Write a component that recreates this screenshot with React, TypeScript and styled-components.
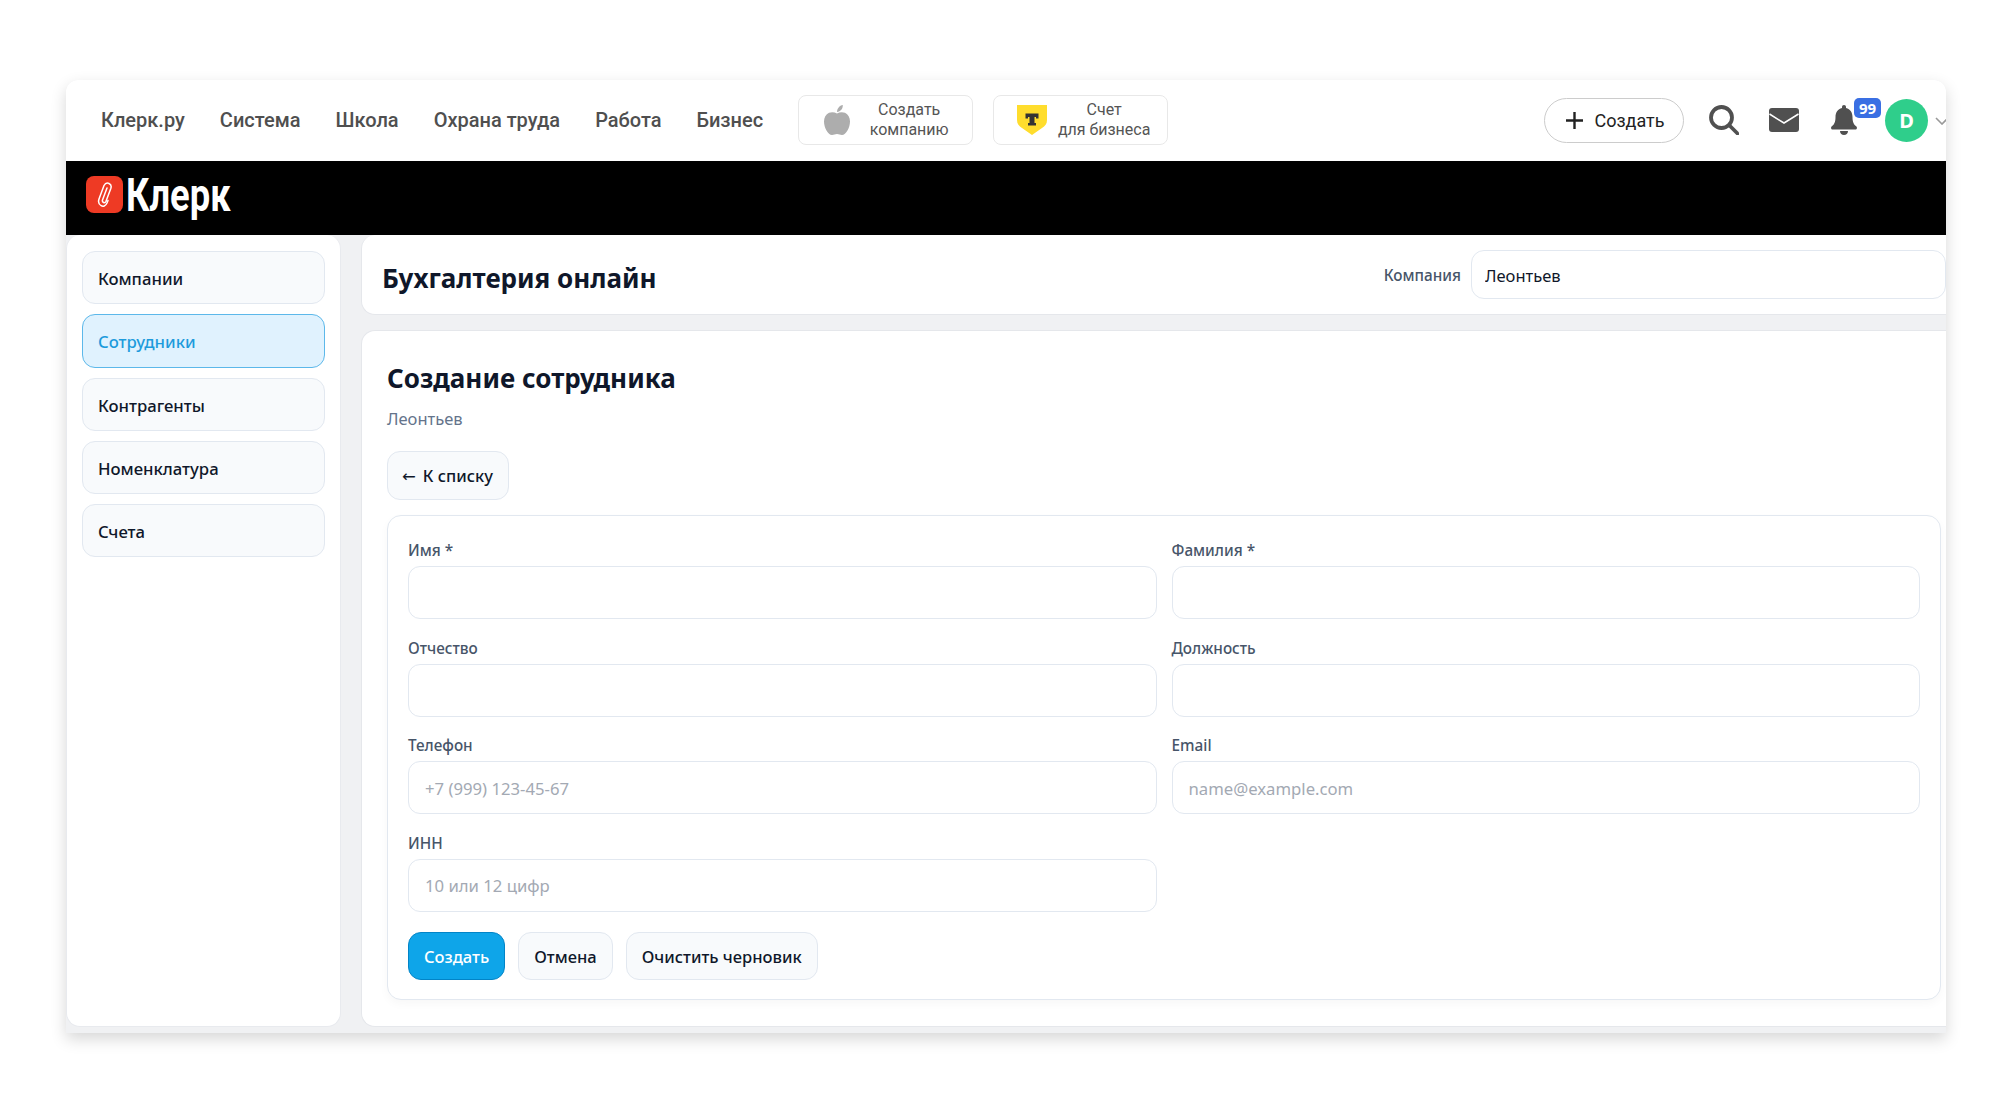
import * as React from "react";
import styled, { createGlobalStyle } from "styled-components";

const UI_FONT = `"Noto Sans", "Open Sans", sans-serif`;
const TOP_FONT = `Roboto, "Liberation Sans", sans-serif`;

const GlobalStyle = createGlobalStyle`
    html, body {
        margin: 0;
        padding: 0;
        background: #fff;
    }
    * {
        box-sizing: border-box;
    }
`;

const Page = styled.div`
    width: 2012px;
    height: 1111px;
    padding: 80px 66px 78px;
    overflow: hidden;
    font-family: ${UI_FONT};
`;

const Frame = styled.div`
    width: 1880px;
    height: 953px;
    display: flex;
    flex-direction: column;
    background: #f0f1f3;
    border-radius: 12px 12px 0 0;
    overflow: hidden;
    box-shadow: 0 6px 16px rgba(0, 0, 0, 0.16);
`;

const TopBar = styled.header`
    height: 81px;
    flex: none;
    background: #fff;
    display: flex;
    align-items: center;
    padding: 0 0 2px 35px;
    font-family: ${TOP_FONT};
`;

const TopNav = styled.nav`
    display: flex;
    gap: 35px;
`;

const TopLink = styled.a`
    font-size: 20px;
    font-weight: 500;
    color: #4f4f4f;
    white-space: nowrap;
`;

const Promos = styled.div`
    display: flex;
    gap: 20px;
    margin-left: 35px;
`;

const Promo = styled.a`
    width: 175px;
    height: 50px;
    display: flex;
    align-items: center;
    padding-left: 23px;
    border: 1px solid #e8e8e8;
    border-radius: 8px;
`;

const PromoIcon = styled.span`
    width: 30px;
    flex: none;
    display: flex;
    justify-content: center;
`;

const PromoText = styled.span`
    flex: 1;
    padding-right: 6px;
    text-align: center;
    font-size: 16px;
    line-height: 20px;
    color: #555;
`;

const TopActions = styled.div`
    margin-left: auto;
    display: flex;
    align-items: center;
`;

const CreatePill = styled.button`
    width: 140px;
    height: 45px;
    margin-top: 1px;
    display: flex;
    align-items: center;
    justify-content: center;
    gap: 11px;
    padding: 0 0 0 3px;
    background: #fff;
    border: 1px solid #ccc;
    border-radius: 23px;
    font-family: ${TOP_FONT};
    font-size: 18px;
    color: #222;
`;

const IconSlot = styled.span<{ $left: number }>`
    display: flex;
    margin-left: ${props => props.$left}px;
`;

const BellWrap = styled.span`
    position: relative;
    display: flex;
    margin-left: 32px;
`;

const Badge = styled.span`
    position: absolute;
    left: 23px;
    top: -7px;
    width: 27px;
    height: 20px;
    background: #3a6fe3;
    border-radius: 5px;
    color: #fff;
    font-family: ${UI_FONT};
    font-size: 15px;
    font-weight: 700;
    line-height: 20px;
    text-align: center;
`;

const Avatar = styled.span`
    width: 43px;
    height: 43px;
    margin: 2px 0 0 28px;
    border-radius: 50%;
    background: #2fce8b;
    color: #fff;
    font-family: ${UI_FONT};
    font-size: 20px;
    font-weight: 700;
    display: flex;
    align-items: center;
    justify-content: center;
`;

const Chevron = styled.span`
    display: flex;
    margin: 2px -3px 0 7px;
`;

const BlackBar = styled.div`
    height: 74px;
    flex: none;
    background: #000;
    display: flex;
    align-items: center;
    padding: 0 0 7px 20px;
`;

const LogoMark = styled.span`
    width: 37px;
    height: 37px;
    border-radius: 8px;
    background: #ee3a24;
    display: flex;
    align-items: center;
    justify-content: center;
`;

const LogoWord = styled.span`
    display: inline-block;
    margin: 1px 0 0 3px;
    font-family: ${TOP_FONT};
    font-size: 46px;
    font-weight: 700;
    line-height: 1;
    color: #fff;
    transform: scaleX(0.79);
    transform-origin: left center;
`;

const Body = styled.div`
    flex: 1;
    min-height: 0;
    display: flex;
    gap: 20px;
    padding-bottom: 6px;
`;

const Sidebar = styled.aside`
    width: 275px;
    flex: none;
    background: #fff;
    border: 1px solid #e8eaee;
    border-top: 0;
    border-radius: 14px;
    padding: 16px 15px;
    display: flex;
    flex-direction: column;
    gap: 10px;
`;

const SideItem = styled.a<{ $active?: boolean }>`
    height: ${props => (props.$active ? 54 : 53)}px;
    display: flex;
    align-items: center;
    padding: 1px 0 0 15px;
    border: 1px solid ${props => (props.$active ? "#5cb8ea" : "#e2e8f0")};
    border-radius: 13px;
    background: ${props => (props.$active ? "#e0f2fe" : "#f8fafc")};
    color: ${props => (props.$active ? "#1d9bdc" : "#0f172a")};
    font-size: 16.7px;
    font-weight: 500;
`;

const Main = styled.main`
    flex: 1;
    min-width: 0;
    display: flex;
    flex-direction: column;
    gap: 15px;
`;

const HeaderCard = styled.div`
    height: 80px;
    flex: none;
    display: flex;
    align-items: center;
    padding-left: 20px;
    background: #fff;
    border: 1px solid #e5e7eb;
    border-top: 0;
    border-right: 0;
    border-radius: 14px 0 0 14px;
`;

const PageTitle = styled.h1`
    margin: 6px 0 0;
    font-size: 26px;
    font-weight: 700;
    color: #0f172a;
`;

const CompanyPicker = styled.label`
    margin-left: auto;
    display: flex;
    align-items: center;
    gap: 10px;
    font-size: 15.3px;
    font-weight: 500;
    color: #475569;
`;

const CompanyInput = styled.input`
    width: 475px;
    height: 49px;
    padding: 2px 13px 0;
    border: 1px solid #e2e8f0;
    border-radius: 13px;
    background: #fff;
    font-family: ${UI_FONT};
    font-size: 16.5px;
    color: #0f172a;
    outline: none;
`;

const ContentCard = styled.section`
    flex: 1;
    min-height: 0;
    padding: 29px 5px 25px 25px;
    background: #fff;
    border: 1px solid #e5e7eb;
    border-right: 0;
    border-radius: 14px 0 0 14px;
`;

const SectionTitle = styled.h2`
    margin: 0;
    font-size: 26px;
    line-height: 36px;
    font-weight: 700;
    color: #0f172a;
`;

const SectionSub = styled.div`
    margin-top: 11px;
    font-size: 16.5px;
    line-height: 24px;
    color: #64748b;
`;

const GhostButton = styled.button`
    height: 48px;
    padding: 1px 15px 0;
    border: 1px solid #e2e8f0;
    border-radius: 13px;
    background: #f8fafc;
    font-family: ${UI_FONT};
    font-size: 16.5px;
    font-weight: 500;
    color: #0f172a;
`;

const BackButton = styled(GhostButton)`
    height: 49px;
    padding: 0 15px 0 14px;
`;

const BackArrow = styled.span`
    margin-right: 7px;
    font-family: "DejaVu Sans", sans-serif;
    font-weight: 400;
`;

const BackRow = styled.div`
    margin-top: 20px;
`;

const FormCard = styled.form`
    margin-top: 15px;
    padding: 24px 20px 19px;
    border: 1px solid #e2e8f0;
    border-radius: 14px;
    background: #fff;
    box-shadow: 0 4px 10px rgba(15, 23, 42, 0.03);
`;

const FieldGrid = styled.div`
    display: grid;
    grid-template-columns: 1fr 1fr;
    column-gap: 15px;
    row-gap: 18.5px;
`;

const Field = styled.label`
    display: flex;
    flex-direction: column;
    gap: 6px;
    font-size: 15.3px;
    line-height: 20px;
    font-weight: 500;
    color: #475569;
`;

const FieldInput = styled.input`
    height: 53px;
    padding: 1px 16px 0;
    border: 1px solid #e2e8f0;
    border-radius: 12px;
    background: #fff;
    font-family: ${UI_FONT};
    font-size: 16.7px;
    color: #0f172a;
    outline: none;
    &::placeholder {
        color: #a3a9b3;
    }
`;

const ActionRow = styled.div`
    margin-top: 20px;
    display: flex;
    gap: 13px;
`;

const PrimaryButton = styled(GhostButton)`
    background: #0ea5e9;
    border-color: #0284c7;
    color: #fff;
`;

const PaperClip = () => (
    <svg width="16" height="28" viewBox="0 0 16 28" fill="none" stroke="#fff" strokeWidth="1.5" strokeLinecap="round">
        <path d="M10 7L5.5 19C4.8 21.5 7.8 22.8 9 20.2L13.8 7.5C15.5 2.5 9.5 0 7 4.5L2 18C0 24 7 28.5 10 22L11 19.5" />
    </svg>
);

const AppleIcon = () => (
    <svg width="26" height="30" viewBox="0 0 26 30" fill="#adadad">
        <path d="M13 8.5C10.5 7 7.5 6.8 5 7.8C1.8 9.2 0 12.6 0 16.5C0 22.5 4 30 8 30C10 30 11 29 13 29C15 29 16 30 18 30C22 30 26 22.5 26 16.5C26 12.6 24.2 9.2 21 7.8C18.5 6.8 15.5 7 13 8.5Z" />
        <path d="M13 7C13 3.5 15.5 0.6 18.8 0C19 3.6 16.6 6.6 13 7Z" />
    </svg>
);

const ShieldIcon = () => (
    <svg width="30" height="30" viewBox="0 0 30 30">
        <path d="M0 0H30V15C30 19 28 21 25 23L15 30L5 23C2 21 0 19 0 15Z" fill="#ffdd2d" />
        <path d="M8.5 8.5H21.5V13.5H19V12H17.5V18H19V20.5H11V18H12.5V12H11V13.5H8.5Z" fill="#333" />
    </svg>
);

const PlusIcon = () => (
    <svg width="17" height="17" viewBox="0 0 17 17" stroke="#222" strokeWidth="2.4">
        <path d="M8.5 0V17M0 8.5H17" />
    </svg>
);

const SearchIcon = () => (
    <svg width="30" height="30" viewBox="0 0 30 30" fill="none" stroke="#505050" strokeWidth="3.8" strokeLinecap="round">
        <circle cx="12.5" cy="12.5" r="10.5" />
        <path d="M20.5 20.5L28.5 28.5" />
    </svg>
);

const MailIcon = () => (
    <svg width="30" height="24" viewBox="0 0 30 24">
        <rect width="30" height="24" rx="3" fill="#505050" />
        <path d="M0.5 6L15 15L29.5 6" fill="none" stroke="#fff" strokeWidth="1.5" />
    </svg>
);

const BellIcon = () => (
    <svg width="26" height="30" viewBox="0 0 26 30" fill="#505050">
        <path d="M13 0C14.2 0 15 0.9 15 2V3C19.4 4 21.5 7.6 21.5 12C21.5 17.5 23 19.6 25.4 21.6C26.4 22.6 26 24.5 24.4 24.5H1.6C0 24.5 -0.4 22.6 0.6 21.6C3 19.6 4.5 17.5 4.5 12C4.5 7.6 6.6 4 11 3V2C11 0.9 11.8 0 13 0Z" />
        <path d="M9 26H17C17 28.4 15.2 30 13 30C10.8 30 9 28.4 9 26Z" />
    </svg>
);

const ChevronIcon = () => (
    <svg width="14" height="8" viewBox="0 0 14 8" fill="none" stroke="#999" strokeWidth="1.6">
        <path d="M1 1L7 7L13 1" />
    </svg>
);

const navLinks = ["Клерк.ру", "Система", "Школа", "Охрана труда", "Работа", "Бизнес"];
const sideLinks = ["Компании", "Сотрудники", "Контрагенты", "Номенклатура", "Счета"];

export default function App() {
    return (
        <Page>
            <GlobalStyle />
            <Frame>
                <TopBar>
                    <TopNav>
                        {navLinks.map(link => (
                            <TopLink key={link}>{link}</TopLink>
                        ))}
                    </TopNav>
                    <Promos>
                        <Promo>
                            <PromoIcon><AppleIcon /></PromoIcon>
                            <PromoText>Создать<br />компанию</PromoText>
                        </Promo>
                        <Promo>
                            <PromoIcon><ShieldIcon /></PromoIcon>
                            <PromoText>Счет<br />для бизнеса</PromoText>
                        </Promo>
                    </Promos>
                    <TopActions>
                        <CreatePill><PlusIcon />Создать</CreatePill>
                        <IconSlot $left={25}><SearchIcon /></IconSlot>
                        <IconSlot $left={30}><MailIcon /></IconSlot>
                        <BellWrap>
                            <BellIcon />
                            <Badge>99</Badge>
                        </BellWrap>
                        <Avatar>D</Avatar>
                        <Chevron><ChevronIcon /></Chevron>
                    </TopActions>
                </TopBar>
                <BlackBar>
                    <LogoMark><PaperClip /></LogoMark>
                    <LogoWord>Клерк</LogoWord>
                </BlackBar>
                <Body>
                    <Sidebar>
                        {sideLinks.map(link => (
                            <SideItem key={link} $active={link === "Сотрудники"}>{link}</SideItem>
                        ))}
                    </Sidebar>
                    <Main>
                        <HeaderCard>
                            <PageTitle>Бухгалтерия онлайн</PageTitle>
                            <CompanyPicker>
                                Компания
                                <CompanyInput defaultValue="Леонтьев" />
                            </CompanyPicker>
                        </HeaderCard>
                        <ContentCard>
                            <SectionTitle>Создание сотрудника</SectionTitle>
                            <SectionSub>Леонтьев</SectionSub>
                            <BackRow>
                                <BackButton type="button"><BackArrow>←</BackArrow>К списку</BackButton>
                            </BackRow>
                            <FormCard>
                                <FieldGrid>
                                    <Field>Имя *<FieldInput /></Field>
                                    <Field>Фамилия *<FieldInput /></Field>
                                    <Field>Отчество<FieldInput /></Field>
                                    <Field>Должность<FieldInput /></Field>
                                    <Field>Телефон<FieldInput placeholder="+7 (999) 123-45-67" /></Field>
                                    <Field>Email<FieldInput placeholder="name@example.com" /></Field>
                                    <Field>ИНН<FieldInput placeholder="10 или 12 цифр" /></Field>
                                </FieldGrid>
                                <ActionRow>
                                    <PrimaryButton type="button">Создать</PrimaryButton>
                                    <GhostButton type="button">Отмена</GhostButton>
                                    <GhostButton type="button">Очистить черновик</GhostButton>
                                </ActionRow>
                            </FormCard>
                        </ContentCard>
                    </Main>
                </Body>
            </Frame>
        </Page>
    );
}
